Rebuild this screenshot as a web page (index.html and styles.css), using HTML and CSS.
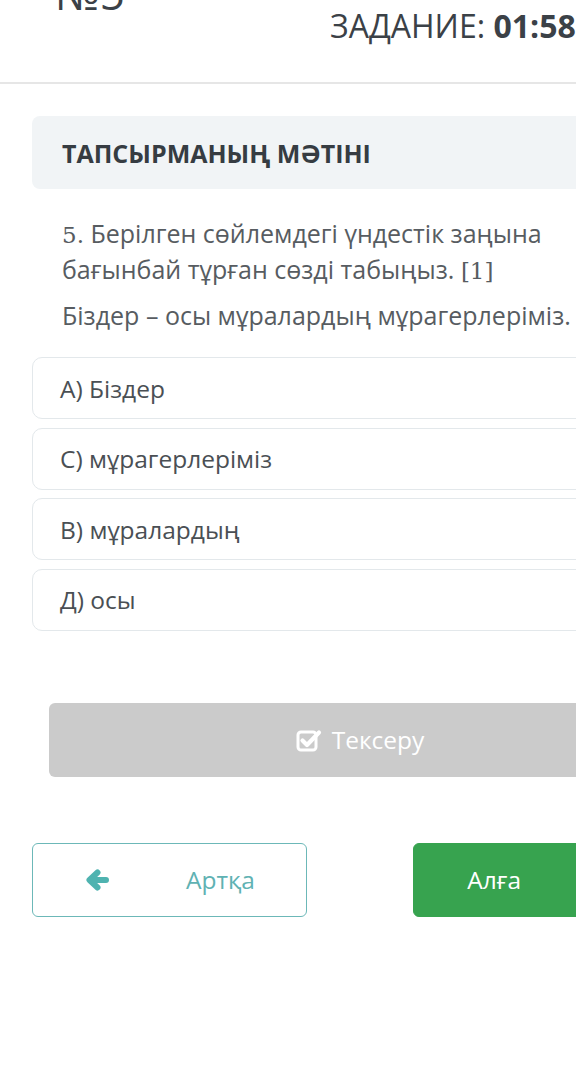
FILE: index.html
```html
<!DOCTYPE html>
<html lang="kk">
<head>
<meta charset="utf-8">
<title>Тапсырма</title>
<link rel="stylesheet" href="styles.css">
</head>
<body>
<div class="page">
  <header class="topbar">
    <div class="task-no">№5</div>
    <div class="timer">ЗАДАНИЕ: <b>01:58</b></div>
  </header>
  <main class="content">
    <div class="section-title">ТАПСЫРМАНЫҢ МӘТІНІ</div>
    <div class="question">
      <p class="q-text"><span class="serif">5.</span> Берілген сөйлемдегі үндестік заңына бағынбай тұрған сөзді табыңыз. <span class="serif">[1]</span></p>
      <p class="q-text">Біздер – осы мұралардың мұрагерлеріміз.</p>
    </div>
    <ul class="options">
      <li class="option">А) Біздер</li>
      <li class="option">С) мұрагерлеріміз</li>
      <li class="option">В) мұралардың</li>
      <li class="option">Д) осы</li>
    </ul>
    <div class="check-wrap">
      <button class="btn-check">
        <svg class="icon-check" width="26" height="24" viewBox="0 0 26 24">
          <rect x="2" y="4" width="18" height="18" rx="3" fill="none" stroke="#fff" stroke-width="3"/>
          <path d="M6.5 12.5 L11 17 L23 4.5" fill="none" stroke="#fff" stroke-width="4.2" stroke-linecap="round" stroke-linejoin="round"/>
        </svg>
        <span>Тексеру</span>
      </button>
    </div>
    <nav class="nav">
      <button class="btn-back">
        <svg class="icon-arrow" width="24" height="22" viewBox="0 0 24 22">
          <path d="M21 11 H5 M12.5 3.5 L4.5 11 L12.5 18.5" fill="none" stroke="#4fb3b0" stroke-width="6" stroke-linecap="round" stroke-linejoin="round"/>
        </svg>
        <span>Артқа</span>
      </button>
      <button class="btn-next">
        <span>Алға</span>
        <svg class="icon-arrow" width="24" height="22" viewBox="0 0 24 22">
          <path d="M3 11 H19 M11.5 3.5 L19.5 11 L11.5 18.5" fill="none" stroke="#fff" stroke-width="6" stroke-linecap="round" stroke-linejoin="round"/>
        </svg>
      </button>
    </nav>
  </main>
</div>
</body>
</html>
```
FILE: styles.css
```css
html, body {
  margin: 0;
  padding: 0;
  background: #fff;
  overflow: hidden;
}
body {
  font-family: "Open Sans", "Noto Sans", sans-serif;
  color: #4a4f54;
}
.page {
  width: 720px;
}
.topbar {
  display: flex;
  align-items: flex-start;
  height: 82px;
  border-bottom: 2px solid #e6e6e6;
}
.task-no {
  width: 275px;
  margin-left: 55px;
  margin-top: -29px;
  font-size: 44px;
  line-height: 44px;
  color: #3b4147;
}
.timer {
  margin-top: 9px;
  font-size: 32px;
  line-height: 34px;
  color: #3b4147;
  white-space: nowrap;
}
.timer b {
  font-weight: 700;
}
.content {
  padding: 0 32px;
}
.section-title {
  margin-top: 32px;
  height: 73px;
  display: flex;
  align-items: center;
  padding-left: 30px;
  background: #f1f4f6;
  border-radius: 8px;
  font-size: 25px;
  font-weight: 700;
  color: #363c42;
}
.question {
  margin-top: 27px;
  padding-left: 30px;
  padding-right: 110px;
}
.q-text {
  margin: 0 0 10px;
  font-size: 25px;
  line-height: 34px;
  color: #575c61;
}
.q-text:last-child {
  margin-bottom: 0;
}
.serif {
  font-family: "DejaVu Serif", "Liberation Serif", serif;
  font-size: 23px;
}
.options {
  list-style: none;
  margin: 25px 0 0;
  padding: 0;
  display: flex;
  flex-direction: column;
  gap: 8.5px;
}
.option {
  height: 60px;
  display: flex;
  align-items: center;
  padding-left: 27px;
  border: 1px solid #e3e8eb;
  border-radius: 10px;
  font-size: 24.5px;
  color: #4a4f54;
}
.check-wrap {
  margin-top: 72px;
  padding: 0 17px;
}
.btn-check {
  width: 100%;
  height: 74px;
  border: none;
  border-radius: 6px;
  background: #cbcbcb;
  display: flex;
  align-items: center;
  justify-content: center;
  gap: 10px;
  font-family: inherit;
  font-size: 24.5px;
  color: #fff;
  padding: 0;
}
.nav {
  margin-top: 66px;
  display: flex;
  justify-content: space-between;
}
.btn-back, .btn-next {
  width: 275px;
  height: 74px;
  border-radius: 6px;
  display: flex;
  align-items: center;
  font-family: inherit;
  font-size: 24.5px;
  padding: 0;
}
.btn-back {
  background: #fff;
  border: 1px solid #6cb8b8;
  color: #5fb2b3;
  padding-left: 52px;
  gap: 77px;
}
.btn-next {
  background: #37a34f;
  border: 1px solid #37a34f;
  color: #fff;
  justify-content: flex-end;
  padding-right: 52px;
  gap: 90px;
}
```
